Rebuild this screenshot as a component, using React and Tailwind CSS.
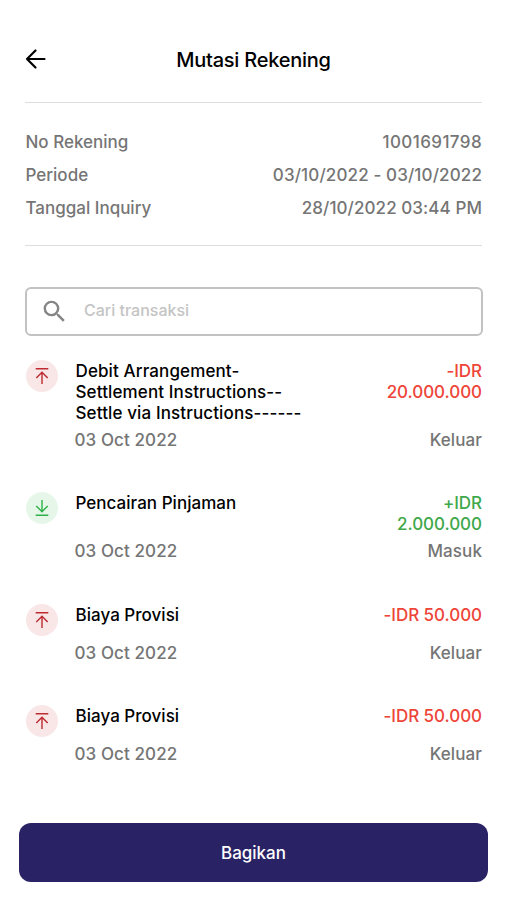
import React from 'react';
import { MdSearch } from 'react-icons/md';

const account = [
  { label: 'No Rekening', value: '1001691798', spacing: 'tracking-[0.4px]' },
  { label: 'Periode', value: '03/10/2022 - 03/10/2022', spacing: 'tracking-[0.13px]' },
  { label: 'Tanggal Inquiry', value: '28/10/2022 03:44 PM', spacing: 'tracking-[0.08px]' },
];

const transactions = [
  {
    title: ['Debit Arrangement-', 'Settlement Instructions--', 'Settle via Instructions------'],
    amount: ['-IDR', '20.000.000'],
    date: '03 Oct 2022',
    type: 'Keluar',
  },
  {
    title: ['Pencairan Pinjaman'],
    amount: ['+IDR', '2.000.000'],
    date: '03 Oct 2022',
    type: 'Masuk',
  },
  { title: ['Biaya Provisi'], amount: ['-IDR 50.000'], date: '03 Oct 2022', type: 'Keluar' },
  { title: ['Biaya Provisi'], amount: ['-IDR 50.000'], date: '03 Oct 2022', type: 'Keluar' },
];

const TransactionIcon = ({ incoming }) => (
  <div
    className={`-mt-px flex h-8 w-8 shrink-0 items-center justify-center rounded-full ${
      incoming ? 'bg-[#e6f7ea] text-[#2fb14a]' : 'bg-[#f9e7e8] text-[#bd2b30]'
    }`}
  >
    <svg
      className={incoming ? 'h-5 w-5 rotate-180' : 'h-5 w-5'}
      viewBox="0 0 20 20"
      fill="none"
      stroke="currentColor"
      strokeWidth="1.4"
    >
      <path d="M3.7 2.8h12.6M10 18V6.5M4.3 12L10 6.3l5.7 5.7" />
    </svg>
  </div>
);

const Transaction = ({ title, amount, date, type }) => {
  const incoming = type === 'Masuk';

  return (
    <li className="flex">
      <TransactionIcon incoming={incoming} />
      <div className="ml-[17px] flex-1">
        <div className="flex min-h-[32px] justify-between pl-px leading-[21px]">
          <p className={`text-black ${title.length > 1 ? 'tracking-[0.12px]' : 'tracking-[0.03px]'}`}>
            {title.map((line) => (
              <span key={line} className="block">{line}</span>
            ))}
          </p>
          <p
            className={`text-right tracking-[-0.04px] ${
              incoming ? 'text-[#3fa84b]' : 'text-[#ee4539]'
            }`}
          >
            {amount.map((line) => (
              <span key={line} className="block">{line}</span>
            ))}
          </p>
        </div>
        <div className="mt-[6px] flex justify-between leading-[21px] tracking-[0.1px] text-[#757575]">
          <span>{date}</span>
          <span>{type}</span>
        </div>
      </div>
    </li>
  );
};

const App = () => (
  <main className="flex h-[900px] w-[507px] flex-col bg-white font-['Inter',sans-serif] text-[17px] font-medium">
    <header className="mx-[25px] grid h-[103px] grid-cols-[24px_1fr_24px] items-center border-b border-[#dedede] pt-[17px]">
      <svg
        className="-mt-[2px] h-6 w-6"
        viewBox="0 0 24 24"
        fill="none"
        stroke="#000"
        strokeWidth="2.2"
        strokeLinecap="round"
        strokeLinejoin="round"
      >
        <path d="M19.500 12H2M10.5 3.5L2 12l8.5 8.5" />
      </svg>
      <h1 className="text-center text-[20px] tracking-[-0.24px]">Mutasi Rekening</h1>
    </header>

    <dl className="mx-[25px] flex h-[143px] flex-col gap-3 border-b border-[#dedede] pt-[29px] pl-[0.5px] leading-[21px] text-[#757575]">
      {account.map(({ label, value, spacing }) => (
        <div key={label} className="flex justify-between">
          <dt>{label}</dt>
          <dd className={spacing}>{value}</dd>
        </div>
      ))}
    </dl>

    <div className="mr-[24px] ml-[25px] mt-[41px] flex h-[49px] items-center rounded-[6px] border-2 border-[#c2c2c2] pl-[13px]">
      <MdSearch className="h-[29px] w-[29px] text-[#858585]" />
      <input
        className="-mt-[3px] ml-[15px] flex-1 text-[16px] outline-none placeholder:text-[#c4c4c4]"
        placeholder="Cari transaksi"
      />
    </div>

    <ul className="mr-[25px] ml-[25.5px] mt-[25.3px] flex flex-col gap-[42.2px]">
      {transactions.map((item, index) => (
        <Transaction key={index} {...item} />
      ))}
    </ul>

    <button
      type="button"
      className="mx-[19px] mt-auto mb-[18px] h-[59px] shrink-0 rounded-[12px] bg-[#292366] pt-[2px] text-white"
    >
      Bagikan
    </button>
  </main>
);

export default App;
